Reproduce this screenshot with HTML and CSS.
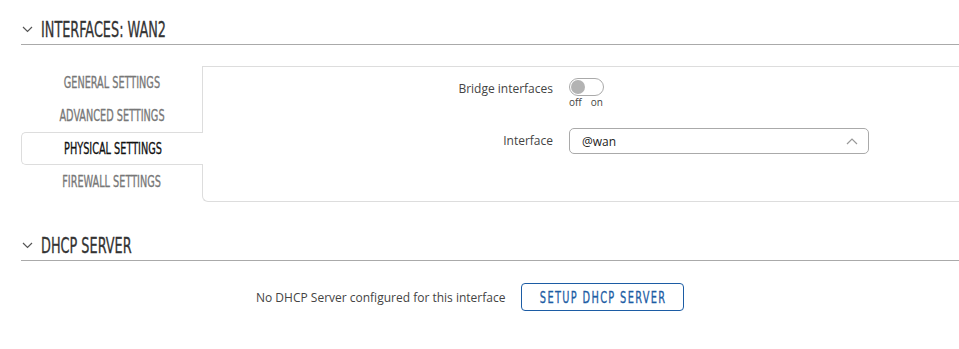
FILE: index.html
```html
<!DOCTYPE html>
<html lang="en">
<head>
    <meta charset="UTF-8">
    <meta name="viewport" content="width=device-width, initial-scale=1.0">
    <title>Interfaces: WAN2</title>
    <link rel="stylesheet" href="styles.css">
</head>
<body>
    <div class="section">
        <div class="section-head">
            <svg class="chev" width="11" height="7" viewBox="0 0 11 7"><path d="M1 1l4.5 4.5L10 1" fill="none" stroke="#555" stroke-width="1.2"/></svg>
            <h2><span class="narrow">INTERFACES: WAN2</span></h2>
        </div>
        <div class="tabs-wrap">
            <ul class="tabs">
                <li><span class="narrow">GENERAL SETTINGS</span></li>
                <li><span class="narrow">ADVANCED SETTINGS</span></li>
                <li class="active"><span class="narrow">PHYSICAL SETTINGS</span></li>
                <li><span class="narrow">FIREWALL SETTINGS</span></li>
            </ul>
            <div class="panel">
                <div class="form-row">
                    <label>Bridge interfaces</label>
                    <div class="switch-box">
                        <span class="switch"><span class="knob"></span></span>
                        <div class="switch-labels"><span>off</span><span>on</span></div>
                    </div>
                </div>
                <div class="form-row">
                    <label>Interface</label>
                    <div class="select">
                        <span>@wan</span>
                        <svg width="12" height="7" viewBox="0 0 12 7"><path d="M1 6l5-5 5 5" fill="none" stroke="#999" stroke-width="1.2"/></svg>
                    </div>
                </div>
            </div>
        </div>
    </div>

    <div class="section dhcp">
        <div class="section-head">
            <svg class="chev" width="11" height="7" viewBox="0 0 11 7"><path d="M1 1l4.5 4.5L10 1" fill="none" stroke="#555" stroke-width="1.2"/></svg>
            <h2><span class="narrow">DHCP SERVER</span></h2>
        </div>
        <div class="dhcp-row">
            <span>No DHCP Server configured for this interface</span>
            <button class="btn-outline"><span class="narrow">SETUP DHCP SERVER</span></button>
        </div>
    </div>
</body>
</html>
```

FILE: styles.css
```css
body { margin: 0; font-family: "Open Sans", Arial, sans-serif; font-size: 12px; color: #444; background: #fff; }
.narrow { display: inline-block; font-family: "DejaVu Sans Condensed", "DejaVu Sans", sans-serif; font-stretch: condensed; white-space: nowrap; transform: scaleX(0.7); }
.section { padding-left: 21px; }
.section-head { display: flex; align-items: center; height: 30px; margin-top: 14px; border-bottom: 1px solid #aaa; }
.chev { margin: 0 8px 0 1px; flex-shrink: 0; }
h2 { margin: 0; font-weight: normal; font-size: 21px; color: #333; width: 0; white-space: nowrap; -webkit-text-stroke: 0.3px #333; }
h2 .narrow { transform-origin: left center; transform: scaleX(0.68); }

.tabs-wrap { display: flex; margin-top: 21px; }
.tabs { list-style: none; margin: 0; padding: 0; width: 182px; flex-shrink: 0; margin-right: -1px; position: relative; z-index: 1; }
.tabs li { height: 33px; display: flex; align-items: center; justify-content: center; font-size: 15px; color: #777; box-sizing: border-box; padding-top: 1px; -webkit-text-stroke: 0.3px #777; }
.tabs li .narrow { transform: scaleX(0.72); }
.tabs li.active { color: #111; background: #fff; border: 1px solid #ddd; border-right: none; border-radius: 5px 0 0 5px; -webkit-text-stroke: 0.3px #111; }
.panel { flex: 1; height: 136px; box-sizing: border-box; border: 1px solid #ddd; border-right: none; border-radius: 0 0 0 6px; padding-top: 11px; }

.form-row { display: grid; grid-template-columns: 350px 300px; column-gap: 16px; align-items: start; margin-bottom: 20px; }
.form-row label { text-align: right; font-size: 12px; color: #444; line-height: 18px; padding-top: 2px; }
.form-row:last-child label { line-height: 26px; padding-top: 0; }
.switch { display: block; width: 33px; height: 16px; border: 1px solid #aaa; border-radius: 9px; position: relative; }
.knob { position: absolute; left: 1px; top: 1px; width: 14px; height: 14px; border-radius: 50%; background: #b3b3b3; }
.switch-labels { font-size: 10px; color: #444; line-height: 12px; padding-left: 0; }
.switch-labels span { margin-right: 9px; }
.select { height: 24px; border: 1px solid #aaa; border-radius: 5px; display: flex; align-items: center; justify-content: space-between; padding: 0 10px 0 12px; color: #222; }

.dhcp .section-head { margin-top: 28px; }
.dhcp-row { display: flex; align-items: center; padding: 22px 0 0 235px; }
.btn-outline { margin-left: 16px; width: 163px; height: 28px; background: #fff; border: 1px solid #1c5ca4; border-radius: 4px; color: #1c5ca4; font-size: 16px; letter-spacing: 2px; padding: 0; display: flex; align-items: center; justify-content: center; overflow: hidden; -webkit-text-stroke: 0.3px #1c5ca4; }
.btn-outline .narrow { transform: scaleX(0.68); }
```
